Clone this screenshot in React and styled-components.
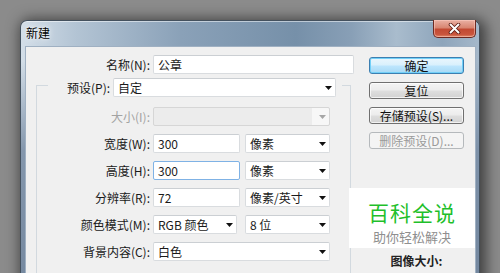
import React from "react";
import styled, { createGlobalStyle, css } from "styled-components";

const GlobalStyle = createGlobalStyle`
  html, body {
    margin: 0;
    padding: 0;
    width: 500px;
    height: 273px;
    overflow: hidden;
    background: #8b8b8b;
  }
  body {
    font-family: "Noto Sans CJK SC", "Noto Sans", sans-serif;
    font-size: 12px;
    color: #1e1e1e;
  }
`;

const Page = styled.div`
  padding: 20px 0 0 20px;
  height: 273px;
  box-sizing: border-box;
`;

const Window = styled.div`
  width: 460px;
  box-sizing: border-box;
  border: 1px solid #44515e;
  border-bottom: none;
  border-radius: 7px 7px 0 0;
  padding: 0 3px 0 4px;
  background:
    linear-gradient(180deg, rgba(120, 140, 165, 0) 0px, rgba(120, 140, 165, 0) 40px, rgba(118, 138, 162, 0.85) 130px, rgba(112, 132, 156, 0.95) 260px),
    linear-gradient(90deg, #d3dee8 0%, #b3c4d4 12%, #8aa1b8 35%, #7690a9 60%, #889fb6 72%, #a9bccd 82%, #8ea5bb 92%, #a5b8ca 100%);
  box-shadow: 3px 2px 14px 3px rgba(0, 0, 0, 0.55), inset 0 1px 0 rgba(255, 255, 255, 0.5);
`;

const TitleBar = styled.div`
  height: 25px;
  display: flex;
  align-items: flex-start;
  justify-content: space-between;
`;

const Title = styled.span`
  padding: 5px 0 0 1px;
  font-size: 12px;
  line-height: 14px;
  color: #000;
  text-shadow: 0 0 6px rgba(255, 255, 255, 0.95), 0 0 2px rgba(255, 255, 255, 0.9);
`;

const CloseButton = styled.div`
  width: 43px;
  height: 18px;
  margin-top: -1px;
  box-sizing: border-box;
  border: 1px solid #6d2a22;
  border-top: none;
  border-radius: 0 0 5px 5px;
  background: linear-gradient(180deg, #eab1a4 0%, #d88672 45%, #c24a33 55%, #c9553d 85%, #e08a6a 100%);
  box-shadow: inset 0 0 0 1px rgba(255, 210, 200, 0.5);
  display: flex;
  align-items: center;
  justify-content: center;
`;

const Client = styled.div`
  position: relative;
  height: 240px;
  box-sizing: border-box;
  border: 1px solid #9fb0c2;
  border-bottom: none;
  background: #f0f0f0;
  display: flex;
`;

const LeftCol = styled.div`
  width: 329px;
  padding-top: 8px;
  display: flex;
  flex-direction: column;
`;

const Row = styled.div`
  display: flex;
  align-items: center;
  height: 19px;
  gap: 3px;
`;

const Label = styled.span`
  width: ${(p) => p.$w}px;
  flex: none;
  text-align: right;
  font-size: 12px;
  line-height: 16px;
  white-space: nowrap;
  color: ${(p) => (p.$disabled ? "#a3a3a3" : "#1a1a1a")};
`;

const Controls = styled.div`
  display: flex;
  gap: ${(p) => p.$gap ?? 5}px;
`;

const fieldBase = css`
  height: 19px;
  box-sizing: border-box;
  border: 1px solid #d9dcdf;
  border-top-color: #cbcfd3;
  border-radius: 2px;
  background: #fff;
  display: flex;
  align-items: center;
  padding-left: 4px;
  font-size: 12px;
  line-height: 16px;
  color: #1a1a1a;
  white-space: nowrap;
`;

const Input = styled.div`
  ${fieldBase}
  width: ${(p) => p.$w}px;
  ${(p) =>
    p.$focused &&
    css`
      border-color: #7fb2e5;
    `}
`;

const SelectBox = styled.div`
  ${fieldBase}
  width: ${(p) => p.$w}px;
  justify-content: space-between;
  padding-right: 3px;
  ${(p) =>
    p.$disabled &&
    css`
      background: linear-gradient(90deg, #ececec 0, #ececec calc(100% - 17px), #f7f7f7 calc(100% - 17px));
      border-color: #d6d6d6;
    `}
`;

const GroupBox = styled.div`
  margin: 11px 0 0 10px;
  width: 315px;
  flex: 1;
  box-sizing: border-box;
  border: 1px solid #d2d9df;
  border-bottom: none;
  display: flex;
  flex-direction: column;
`;

const Legend = styled.div`
  margin: -8px 0 0 11px;
  width: 294px;
  box-sizing: border-box;
  padding: 0 6px 0 19px;
  background: #f0f0f0;
  display: flex;
  align-items: center;
  gap: 3px;
  height: 19px;
`;

const GroupRows = styled.div`
  margin-top: 10px;
  display: flex;
  flex-direction: column;
  gap: 8px;
`;

const RightCol = styled.div`
  margin-left: 14px;
  width: 95px;
  padding-top: 10px;
  display: flex;
  flex-direction: column;
  gap: 8px;
`;

const Button = styled.div`
  height: 17px;
  box-sizing: border-box;
  border: 1px solid #707070;
  border-radius: 3px;
  background: linear-gradient(180deg, #f4f4f4 0%, #ececec 48%, #dedede 52%, #d2d2d2 100%);
  box-shadow: inset 0 0 0 1px rgba(255, 255, 255, 0.7);
  font-size: 12px;
  line-height: 15px;
  text-align: center;
  color: #111;
  white-space: nowrap;
  ${(p) =>
    p.$primary &&
    css`
      border-color: #3c7fb1;
      background: linear-gradient(180deg, #eaf6fd 0%, #d9f0fc 48%, #bee6fd 52%, #a7d9f5 100%);
      box-shadow: inset 0 0 0 1px #72d0f8;
    `}
  ${(p) =>
    p.$disabled &&
    css`
      border-color: #b5b9bc;
      background: #f4f4f4;
      box-shadow: none;
      color: #9a9a9a;
    `}
`;

const SizeLabel = styled.div`
  margin-top: 97px;
  text-align: center;
  font-size: 12px;
  line-height: 14px;
  font-weight: 700;
  color: #222;
`;

const Watermark = styled.div`
  position: absolute;
  left: 323px;
  top: 141px;
  width: 126px;
  height: 60px;
  background: #fff;
  display: flex;
  flex-direction: column;
  align-items: center;
  padding-top: 9px;
  box-sizing: border-box;
`;

const WmTitle = styled.div`
  font-size: 21px;
  line-height: 30px;
  color: #1fbf2b;
  letter-spacing: 1px;
`;

const WmSub = styled.div`
  font-size: 13px;
  line-height: 19px;
  color: #8f8f8f;
`;

const Arrow = ({ disabled }) => (
  <svg width="7" height="4" viewBox="0 0 7 4">
    <polygon points="0,0 7,0 3.5,4" fill={disabled ? "#a6a6a6" : "#111"} />
  </svg>
);

const Select = ({ w, children, disabled }) => (
  <SelectBox $w={w} $disabled={disabled}>
    <span>{children}</span>
    <Arrow disabled={disabled} />
  </SelectBox>
);

const CloseIcon = () => (
  <svg width="13" height="11" viewBox="0 0 13 11">
    <path d="M2.5 1.5 L10.5 9.5 M10.5 1.5 L2.5 9.5" stroke="#5a1a12" strokeWidth="3.6" strokeLinecap="round" />
    <path d="M2.5 1.5 L10.5 9.5 M10.5 1.5 L2.5 9.5" stroke="#fff" strokeWidth="2" strokeLinecap="round" />
  </svg>
);

export default function App() {
  return (
    <Page>
      <GlobalStyle />
      <Window>
        <TitleBar>
          <Title>新建</Title>
          <CloseButton>
            <CloseIcon />
          </CloseButton>
        </TitleBar>
        <Client>
          <LeftCol>
            <Row>
              <Label $w={124}>名称(N):</Label>
              <Input $w={201}>公章</Input>
            </Row>
            <GroupBox>
              <Legend>
                <Label $w={43}>预设(P):</Label>
                <Select w={223}>自定</Select>
              </Legend>
              <GroupRows>
                <Row>
                  <Label $w={113} $disabled>大小(I):</Label>
                  <Select w={177} disabled></Select>
                </Row>
                <Row>
                  <Label $w={113}>宽度(W):</Label>
                  <Controls>
                    <Input $w={87}>300</Input>
                    <Select w={85}>像素</Select>
                  </Controls>
                </Row>
                <Row>
                  <Label $w={113}>高度(H):</Label>
                  <Controls>
                    <Input $w={87} $focused>300</Input>
                    <Select w={85}>像素</Select>
                  </Controls>
                </Row>
                <Row>
                  <Label $w={113}>分辨率(R):</Label>
                  <Controls>
                    <Input $w={87}>72</Input>
                    <Select w={85}>像素/英寸</Select>
                  </Controls>
                </Row>
                <Row>
                  <Label $w={113}>颜色模式(M):</Label>
                  <Controls $gap={8}>
                    <Select w={84}>RGB 颜色</Select>
                    <Select w={85}>8 位</Select>
                  </Controls>
                </Row>
                <Row>
                  <Label $w={113}>背景内容(C):</Label>
                  <Select w={177}>白色</Select>
                </Row>
              </GroupRows>
            </GroupBox>
          </LeftCol>
          <RightCol>
            <Button $primary>确定</Button>
            <Button>复位</Button>
            <Button>存储预设(S)...</Button>
            <Button $disabled>删除预设(D)...</Button>
            <SizeLabel>图像大小:</SizeLabel>
          </RightCol>
          <Watermark>
            <WmTitle>百科全说</WmTitle>
            <WmSub>助你轻松解决</WmSub>
          </Watermark>
        </Client>
      </Window>
    </Page>
  );
}
